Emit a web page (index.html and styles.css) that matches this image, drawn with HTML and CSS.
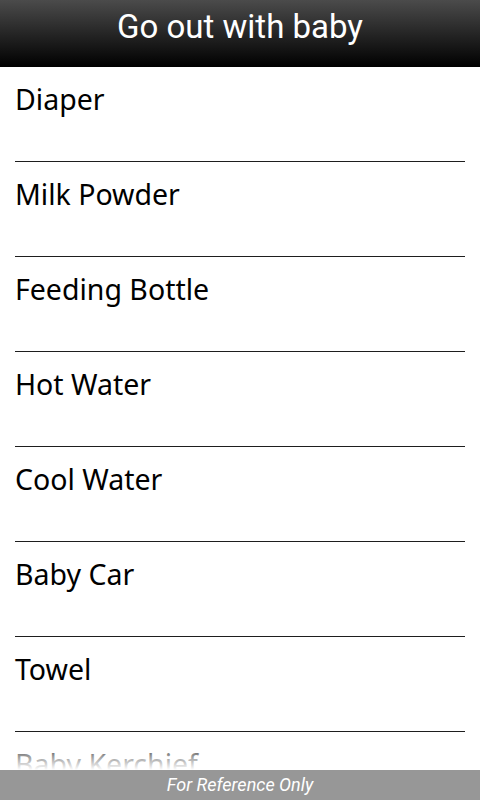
FILE: index.html
```html
<!DOCTYPE html>
<html lang="en">
<head>
  <meta charset="UTF-8">
  <meta name="viewport" content="width=device-width, initial-scale=1.0">
  <title>Go out with baby</title>
  <link rel="stylesheet" href="styles.css">
</head>
<body>
  <div class="screen">
    <div class="title-bar">Go out with baby</div>
    <div class="list">
      <div class="item">Diaper</div>
      <div class="item">Milk Powder</div>
      <div class="item">Feeding Bottle</div>
      <div class="item">Hot Water</div>
      <div class="item">Cool Water</div>
      <div class="item">Baby Car</div>
      <div class="item">Towel</div>
      <div class="item">Baby Kerchief</div>
    </div>
    <div class="footer">For Reference Only</div>
  </div>
</body>
</html>
```

FILE: styles.css
```css
html, body { margin: 0; padding: 0; }
body { background: #fff; font-family: "Noto Sans", "Open Sans", sans-serif; }
.screen { width: 480px; height: 800px; display: flex; flex-direction: column; overflow: hidden; }
.title-bar { height: 67px; flex: none; background: linear-gradient(#4b4b4b, #000); color: #fff; font-family: Roboto, sans-serif; font-size: 33px; line-height: 54px; text-align: center; }
.list { flex: 1; overflow: hidden; position: relative; }
.list::after { content: ""; position: absolute; left: 0; right: 0; bottom: 0; height: 28px; background: linear-gradient(rgba(255,255,255,0), rgba(255,255,255,0.6) 50%, #fff); }
.item { height: 95px; box-sizing: border-box; margin: 0 15px; padding: 15px 0 0 0; border-bottom: 1px solid #1e1e1e; font-size: 28.5px; line-height: 34px; color: #000; }
.footer { height: 30px; flex: none; background: #979797; color: #fff; font-family: Roboto, sans-serif; font-style: italic; font-size: 18px; line-height: 30px; text-align: center; }
```
